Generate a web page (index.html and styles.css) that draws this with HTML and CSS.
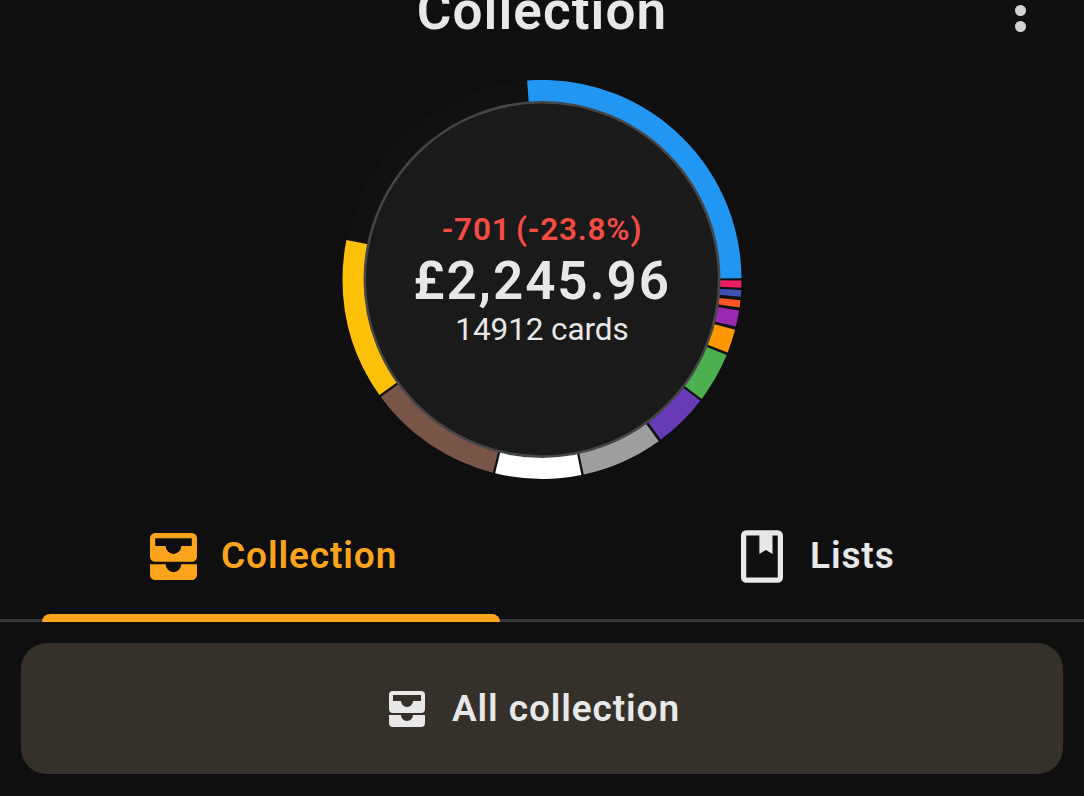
FILE: index.html
```
<!DOCTYPE html>
<html lang="en">
<head>
<meta charset="utf-8">
<title>Collection</title>
<link rel="stylesheet" href="styles.css">
</head>
<body>
<main class="screen">
  <header class="topbar">
    <h1 class="title">Collection</h1>
    <button class="more" aria-label="More options"><i></i><i></i><i></i></button>
  </header>

  <section class="summary">
    <svg class="ring" viewBox="0 0.6 400 400" aria-hidden="true">
      <g class="segments" transform="rotate(-90 200 200)">
        <circle class="base" cx="200" cy="200" r="188.5"/>
        <circle class="seg blue" pathLength="360" cx="200" cy="200" r="188.5" stroke-dasharray="94 266" stroke-dashoffset="4.3"/>
        <circle class="seg pink" pathLength="360" cx="200" cy="200" r="188.5" stroke-dasharray="2.1 357.9" stroke-dashoffset="-90.3"/>
        <circle class="seg indigo" pathLength="360" cx="200" cy="200" r="188.5" stroke-dasharray="1.9 358.1" stroke-dashoffset="-93.1"/>
        <circle class="seg coral" pathLength="360" cx="200" cy="200" r="188.5" stroke-dasharray="2.1 357.9" stroke-dashoffset="-96"/>
        <circle class="seg purple" pathLength="360" cx="200" cy="200" r="188.5" stroke-dasharray="4.7 355.3" stroke-dashoffset="-99"/>
        <circle class="seg orange" pathLength="360" cx="200" cy="200" r="188.5" stroke-dasharray="6.9 353.1" stroke-dashoffset="-104.6"/>
        <circle class="seg green" pathLength="360" cx="200" cy="200" r="188.5" stroke-dasharray="14.5 345.5" stroke-dashoffset="-112.3"/>
        <circle class="seg violet" pathLength="360" cx="200" cy="200" r="188.5" stroke-dasharray="15.9 344.1" stroke-dashoffset="-127.5"/>
        <circle class="seg grey" pathLength="360" cx="200" cy="200" r="188.5" stroke-dasharray="23.7 336.3" stroke-dashoffset="-144.2"/>
        <circle class="seg white" pathLength="360" cx="200" cy="200" r="188.5" stroke-dasharray="25 335" stroke-dashoffset="-168.6"/>
        <circle class="seg brown" pathLength="360" cx="200" cy="200" r="188.5" stroke-dasharray="39.6 320.4" stroke-dashoffset="-194.3"/>
        <circle class="seg yellow" pathLength="360" cx="200" cy="200" r="188.5" stroke-dasharray="46.8 313.2" stroke-dashoffset="-234.6"/>
      </g>
      <circle class="disc" cx="200" cy="200" r="177.2"/>
    </svg>
    <div class="figures">
      <span class="change">-701 (-23.8%)</span>
      <strong class="value">£2,245.96</strong>
      <span class="count">14912 cards</span>
    </div>
  </section>

  <nav class="tabs">
    <a class="tab active">
      <svg class="tab-icon" viewBox="3 3 18 18"><path fill-rule="evenodd" d="M5 3h14a2 2 0 0 1 2 2v7a2 2 0 0 1-2 2H5a2 2 0 0 1-2-2V5a2 2 0 0 1 2-2zM5 5v3h4a3 3 0 0 0 6 0h4V5zM3 15h6a3 3 0 0 0 6 0h6v4a2 2 0 0 1-2 2H5a2 2 0 0 1-2-2z"/></svg>
      <span class="tab-label">Collection</span>
    </a>
    <a class="tab lists">
      <svg class="book-icon" viewBox="4 2 16 20"><path fill-rule="evenodd" d="M6 2h12a2 2 0 0 1 2 2v16a2 2 0 0 1-2 2H6a2 2 0 0 1-2-2V4a2 2 0 0 1 2-2zM6 4v16h12V4h-2v7l-2.5-1.5L11 11V4z"/></svg>
      <span class="tab-label">Lists</span>
    </a>
  </nav>

  <button class="all">
    <svg class="all-icon" viewBox="3 3 18 18"><path fill-rule="evenodd" d="M5 3h14a2 2 0 0 1 2 2v7a2 2 0 0 1-2 2H5a2 2 0 0 1-2-2V5a2 2 0 0 1 2-2zM5 5v3h4a3 3 0 0 0 6 0h4V5zM3 15h6a3 3 0 0 0 6 0h6v4a2 2 0 0 1-2 2H5a2 2 0 0 1-2-2z"/></svg>
    <span class="all-label">All collection</span>
  </button>
</main>
</body>
</html>
```
FILE: styles.css
```
* { box-sizing: border-box; }
body {
  margin: 0;
  background: #0f0f0f;
  color: #e8e8e8;
  font-family: Roboto, "Open Sans", sans-serif;
}
.screen {
  width: 1084px;
  height: 796px;
  overflow: hidden;
  display: flex;
  flex-direction: column;
}
.topbar {
  height: 80px;
  flex: none;
  display: grid;
  grid-template-columns: 126px 1fr 126px;
  align-items: start;
}
.title {
  grid-column: 2;
  margin: -20px 0 0;
  text-align: center;
  font-size: 53px;
  line-height: 62px;
  font-weight: 600;
  letter-spacing: 1.1px;
}
.more {
  margin-top: -11px;
  padding: 0 1px 0 0;
  border: 0;
  background: none;
  display: flex;
  flex-direction: column;
  align-items: center;
  gap: 5px;
}
.more i {
  width: 11px;
  height: 11px;
  border-radius: 50%;
  background: #d4d4d4;
}
.summary {
  height: 400px;
  flex: none;
  display: grid;
  place-items: center;
}
.ring {
  grid-area: 1 / 1;
  width: 400px;
  height: 400px;
}
.segments circle { fill: none; stroke-width: 22; }
.segments .base { stroke: #111; }
.segments .blue { stroke: #2196f3; }
.pink { stroke: #e91e63; }
.indigo { stroke: #3f51b5; }
.coral { stroke: #ff5722; }
.purple { stroke: #9c27b0; }
.orange { stroke: #ff9800; }
.green { stroke: #4caf50; }
.violet { stroke: #673ab7; }
.grey { stroke: #9e9e9e; }
.white { stroke: #fff; }
.brown { stroke: #795548; }
.yellow { stroke: #ffc107; }
.disc { fill: #1a1a1a; stroke: #464646; stroke-width: 2.6; }
.figures {
  grid-area: 1 / 1;
  display: flex;
  flex-direction: column;
  align-items: center;
  white-space: nowrap;
}
.change {
  color: #f44b42;
  font-size: 31.5px;
  line-height: 36px;
  font-weight: 600;
  letter-spacing: .8px;
  word-spacing: -3px;
}
.value {
  font-size: 53px;
  line-height: 62px;
  padding-top: 2px;
  font-weight: 600;
  letter-spacing: 1.9px;
}
.count {
  font-size: 31.5px;
  line-height: 36px;
  letter-spacing: -.1px;
}
.tabs {
  height: 142px;
  flex: none;
  display: grid;
  grid-template-columns: 1fr 1fr;
  background: linear-gradient(#363636, #363636) 0 139px / 100% 3px no-repeat;
}
.tab {
  position: relative;
  display: flex;
  align-items: center;
  height: 152px;
  color: #e8e8e8;
}
.tab svg, .all svg { fill: currentColor; flex: none; }
.active { padding-left: 150px; color: #fca51c; }
.active::after {
  content: "";
  position: absolute;
  left: 42px;
  top: 134px;
  width: 458px;
  height: 8px;
  border-radius: 8px 8px 0 0;
  background: #fca51c;
}
.lists { padding-left: 199px; }
.tab-icon { width: 47px; height: 47px; margin-right: 24px; }
.book-icon { width: 42px; height: 53px; margin-right: 27px; }
.tab-label, .all-label {
  font-size: 37px;
  line-height: 44px;
  font-weight: 600;
  letter-spacing: .9px;
}
.all {
  margin: 21px 21px 0;
  height: 131px;
  padding: 0 15px 0 0;
  border: 0;
  border-radius: 26px;
  background: #36302a;
  color: #e8e8e8;
  font-family: inherit;
  display: flex;
  align-items: center;
  justify-content: center;
}
.all-icon { width: 36px; height: 36px; margin-right: 27px; }
```
